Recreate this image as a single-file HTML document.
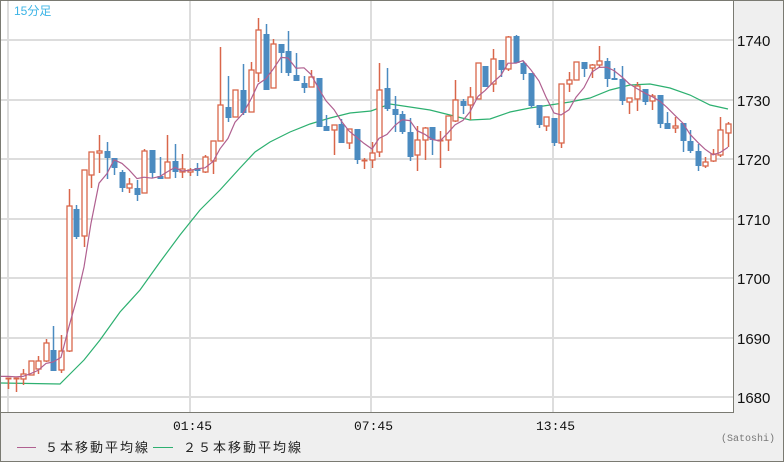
<!DOCTYPE html>
<html><head><meta charset="utf-8"><style>
html,body{margin:0;padding:0;}
body{width:784px;height:462px;overflow:hidden;background:#efefef;font-family:"Liberation Sans","Noto Sans CJK JP",sans-serif;}
</style></head><body>
<svg id="s" width="784" height="462" xmlns="http://www.w3.org/2000/svg" style="position:absolute;left:0;top:0">
<rect x="0" y="0" width="784" height="462" fill="#efefef"/>
<rect x="1" y="1" width="732" height="411" fill="#ffffff"/>
<g id="grid" stroke="#dddddd" stroke-width="2"></g>
<polyline fill="none" stroke="#2db070" stroke-width="1.2" points="1,383 60,384 72,372 84,360 100,340 120,312 140,290 160,262 180,235 200,210 220,190 240,168 255,152 270,142 290,132 310,124 330,118 350,113 371,111 390,104 410,107 430,110 450,115 470,120 490,119 510,112 530,108 550,105 570,102 590,98 610,90 630,85 650,84 670,88 690,95 710,105 728,109"/>
<g id="c"></g>
<rect x="0.5" y="0.5" width="783" height="461" fill="none" stroke="#7a7a72"/>
<line x1="733.5" y1="0" x2="733.5" y2="412" stroke="#7a7a72"/>
<line x1="0" y1="412.5" x2="734" y2="412.5" stroke="#7a7a72"/>
<text x="14" y="15" font-size="12" fill="#3cb4e6">15分足</text>
<g font-family="Liberation Sans, sans-serif" font-size="15" fill="#111">
<text x="737" y="46">1740</text><text x="737" y="106">1730</text><text x="737" y="165">1720</text>
<text x="737" y="225">1710</text><text x="737" y="284">1700</text><text x="737" y="344">1690</text><text x="737" y="403">1680</text>
</g>
<g font-family="Liberation Mono, monospace" font-size="13" fill="#111">
<text x="173" y="430">01:45</text><text x="354" y="430">07:45</text><text x="536" y="430">13:45</text>
</g>
<line x1="17" y1="447.5" x2="36" y2="447.5" stroke="#b06090"/>
<text x="45" y="452" font-size="13" fill="#222" letter-spacing="2">５本移動平均線</text>
<line x1="153" y1="447.5" x2="173" y2="447.5" stroke="#2db070"/>
<text x="183" y="452" font-size="13" fill="#222" letter-spacing="2">２５本移動平均線</text>
<text x="721" y="441" font-family="Liberation Mono, monospace" font-size="10" fill="#777">(Satoshi)</text>
</svg>
<script>
var ns="http://www.w3.org/2000/svg";
function el(p,t,a){var e=document.createElementNS(ns,t);for(var k in a)e.setAttribute(k,a[k]);p.appendChild(e);return e;}
var g=document.getElementById('grid');
[40,100,159,219,278,338,397].forEach(function(y){el(g,'line',{x1:1,y1:y,x2:733,y2:y});});
[8,190,371,553].forEach(function(x){el(g,'line',{x1:x,y1:1,x2:x,y2:412});});
var D=[
[379,378,378,389],[379,378,378,392],[379,374,369,385],[375,361,361,374],[369,361,356,374],[361,343,339,362],
[350,371,326,371],[370,351,335,373],[351,206,189,352],[209,237,205,239],[236,170,170,247],[175,152,152,188],
[153,151,135,173],[151,158,142,179],[158,168,158,175],[172,188,170,192],[188,184,178,193],[188,195,180,201],
[193,151,149,193],[150,173,150,178],[176,179,157,179],[178,162,135,178],[161,172,144,178],[172,169,154,178],
[172,170,168,176],[168,171,163,176],[172,157,155,173],[161,141,141,174],[141,105,47,141],[107,118,76,122],
[117,90,90,117],[90,113,64,115],[112,70,62,112],[73,30,18,82],[34,90,24,90],[88,44,39,88],
[44,53,44,73],[51,73,31,76],[75,81,53,76],[83,88,76,93],[87,77,70,87],[78,127,78,127],
[126,131,115,131],[130,125,125,155],[124,143,119,143],[143,129,129,149],[129,160,129,164],[160,160,158,169],
[160,153,142,168],[152,90,63,157],[88,109,68,111],[109,115,96,132],[114,132,111,134],[132,157,118,161],
[155,140,126,171],[140,128,127,160],[127,140,127,155],[140,140,131,168],[140,116,116,151],[121,100,80,122],
[101,106,99,114],[105,97,87,120],[99,63,63,99],[66,87,66,87],[84,59,49,92],[60,70,60,77],
[69,37,36,71],[36,63,35,63],[63,74,61,80],[73,106,73,108],[105,125,105,128],[126,117,117,131],
[118,143,118,146],[143,84,84,148],[84,80,72,92],[80,62,62,80],[62,69,62,77],[68,65,64,78],
[65,61,46,68],[61,79,58,87],[78,79,68,79],[79,101,66,105],[102,98,98,114],[99,86,82,111],
[89,102,89,105],[101,96,94,110],[95,124,95,128],[123,129,112,129],[128,126,117,133],[123,141,123,152],
[141,151,130,153],[151,166,144,171],[166,162,157,168],[161,154,149,162],[155,130,117,157],[133,124,122,147]];
var c=document.getElementById('c');
var step=(728-8)/(D.length-1);
var xs=D.map(function(d,i){return Math.round(8+i*step);});
var closes=D.map(function(d){return d[1];});
function ma(n,pad){var out=[];var arr=[];for(var i=0;i<n-1;i++)arr.push(pad);arr=arr.concat(closes);
for(var i=0;i<closes.length;i++){var s=0;for(var j=0;j<n;j++)s+=arr[i+j];out.push(s/n);}return out;}
var m5=ma(5,376);
function poly(m,col,x0){var pts=[x0+','+m[0]];m.forEach(function(v,i){pts.push(xs[i]+','+v.toFixed(1));});
el(c,'polyline',{points:pts.join(' '),fill:'none',stroke:col,'stroke-width':1.2});}
D.forEach(function(d,i){
var x=xs[i],o=d[0],cl=d[1],h=d[2],l=d[3];var up=cl<=o;var col=up?'#d9664a':'#4b8bc0';
el(c,'line',{x1:x+0.5,y1:h,x2:x+0.5,y2:l,stroke:col,'stroke-width':1.5});
var t=Math.min(o,cl),b=Math.max(o,cl);
if(up){if(b-t<2){el(c,'rect',{x:x-2.5,y:t-0.5,width:6,height:Math.max(b-t,1)+1,fill:col});}
else el(c,'rect',{x:x-2,y:t,width:5,height:b-t,fill:'#fff',stroke:col,'stroke-width':1.3});}
else el(c,'rect',{x:x-2.5,y:t,width:6,height:Math.max(b-t,2),fill:col});
});
poly(m5,'#b06090',1);
</script>
</body></html>
